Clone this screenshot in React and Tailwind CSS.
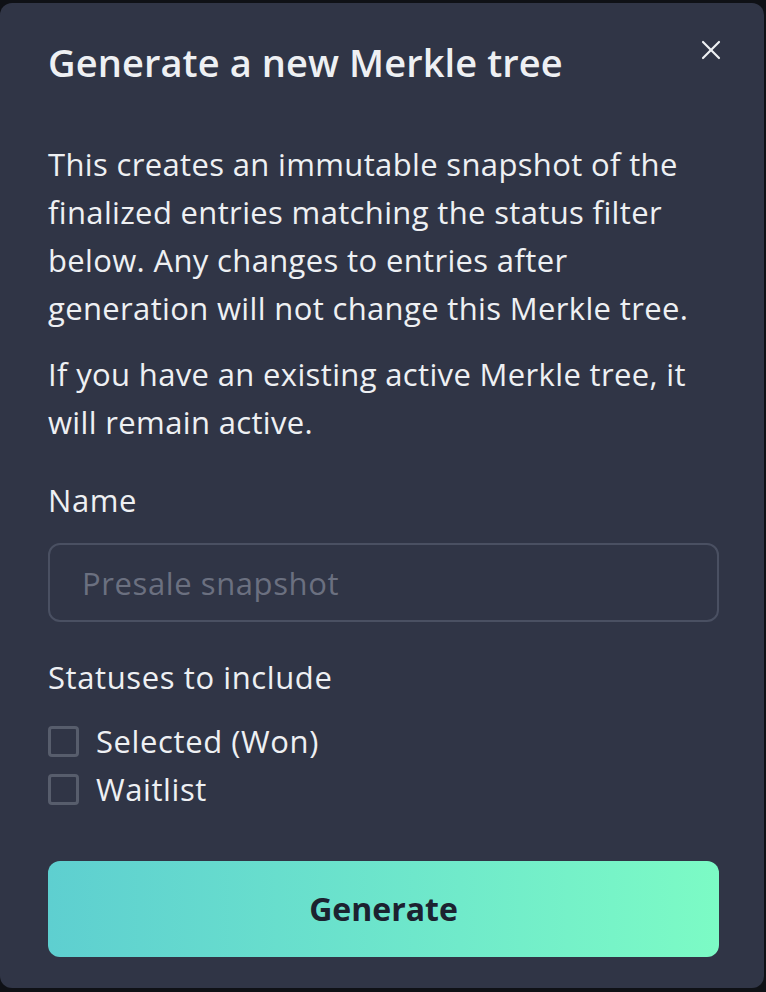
import { X } from "lucide-react";

export default function App() {
    return (
        <div className="min-h-[992px] w-[766px] bg-[#0f1116] pt-[3px] pr-[2px] pb-[4px]" style={{ fontFamily: '"Open Sans", "Noto Sans", sans-serif' }}>
            <div className="relative h-[985px] rounded-[12px] bg-[#303546] pl-12 pr-[45px] pt-[35px] text-[#eef0f3]">
                <button className="absolute right-[37px] top-[31px] text-[#eef0f3]">
                    <X size={32} strokeWidth={1.6} />
                </button>

                <h2 className="text-[38px] font-semibold leading-[48px] tracking-[0.1px]">Generate a new Merkle tree</h2>

                <div className="mt-[54px] text-[31px] leading-[48px] tracking-[0.35px]">
                    <p>
                        This creates an immutable snapshot of the<br />
                        finalized entries matching the status filter<br />
                        below. Any changes to entries after<br />
                        generation will not change this Merkle tree.
                    </p>
                    <p className="mt-[18px]">
                        If you have an existing active Merkle tree, it<br />
                        will remain active.
                    </p>
                </div>

                <label className="mt-[30px] block text-[31px] font-medium leading-[48px] tracking-[0.6px]">Name</label>
                <input
                    type="text"
                    placeholder="Presale snapshot"
                    className="mt-[19px] block h-[79px] w-full rounded-[12px] border-2 border-[#4a5062] bg-transparent px-[32px] text-[31px] tracking-[0.6px] text-[#eef0f3] outline-none placeholder:text-[#6b7080]"
                />

                <div className="mt-[31px] text-[31px] font-medium leading-[48px] tracking-[0.6px]">Statuses to include</div>

                <div className="mt-[16px] flex flex-col">
                    {["Selected (Won)", "Waitlist"].map((label) => (
                        <label key={label} className="flex h-[48px] items-center gap-[17px] text-[31px] tracking-[0.6px]">
                            <span className="h-[31px] w-[31px] shrink-0 rounded-[4px] border-[3px] border-[#575d6c]" />
                            {label}
                        </label>
                    ))}
                </div>

                <button className="mt-[48px] flex h-[96px] w-full items-center justify-center rounded-[12px] bg-gradient-to-r from-[#5ecfd0] to-[#7cfbc5] text-[32px] font-bold text-[#1c2230]">
                    Generate
                </button>
            </div>
        </div>
    );
}
